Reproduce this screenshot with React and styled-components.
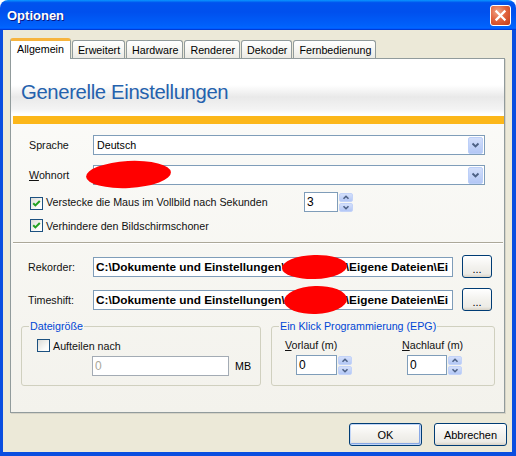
import React from 'react';
import styled, { createGlobalStyle } from 'styled-components';

const Global = createGlobalStyle`
  html, body { margin: 0; padding: 0; background: #ffffff; }
  body { font-family: "Liberation Sans", Arial, sans-serif; font-size: 10.7px; color: #000; }
  * { box-sizing: border-box; }
`;

const Window = styled.div`
  width: 516px;
  height: 456px;
  display: flex;
  flex-direction: column;
  border-radius: 8px 8px 0 0;
  overflow: hidden;
`;

const TitleBar = styled.div`
  height: 30px;
  flex: none;
  display: flex;
  align-items: center;
  justify-content: space-between;
  padding: 0 5px 0 7px;
  background: linear-gradient(to bottom, #0997ff 0%, #0053ee 9%, #0050ee 40%, #0061fb 86%, #0066ff 92%, #005bff 95%, #003dd7 97%, #003dd7 100%);
`;

const TitleText = styled.div`
  color: #fff;
  font: bold 13px/16px "Liberation Sans", Arial, sans-serif;
  text-shadow: 1px 1px 0 #0a1883;
  padding-top: 1px;
`;

const CloseBtn = styled.div`
  width: 21px;
  height: 21px;
  border: 1px solid #fff;
  border-radius: 3px;
  background: radial-gradient(circle at 35% 30%, #f0a487 0%, #e2653f 45%, #c23a16 100%);
  display: flex;
  align-items: center;
  justify-content: center;
  margin-top: 1px;
`;

const Frame = styled.div`
  flex: 1;
  display: flex;
  flex-direction: column;
  background: #ece9d8;
  border-style: solid;
  border-color: #0a4ee0;
  border-width: 0 4px 4px 3px;
  padding: 8px 7px 6px 7px;
`;

const TabRow = styled.div`
  display: flex;
  align-items: flex-end;
  gap: 1px;
  height: 20px;
  position: relative;
  z-index: 1;
`;

const Tab = styled.div`
  height: ${p => (p.$active ? 21 : 18)}px;
  margin-bottom: ${p => (p.$active ? -1 : 0)}px;
  padding: ${p => (p.$active ? '1px 6px 0' : '2px 4px 0 5px')};
  border: 1px solid #919b9c;
  border-bottom: none;
  border-top: ${p => (p.$active ? '3px solid #f7b43e' : '1px solid #919b9c')};
  border-radius: 3px 3px 0 0;
  background: ${p => (p.$active ? '#fff' : 'linear-gradient(#ffffff, #f4f4f0 60%, #ebeae4)')};
  line-height: 14px;
  font-size: 10.7px;
  white-space: nowrap;
  color: #000;
`;

const Panel = styled.div`
  flex: 1;
  display: flex;
  flex-direction: column;
  border: 1px solid #919b9c;
  background: linear-gradient(#fcfcfa, #f3f2ec);
  box-shadow: 1px 1px 0 #d6d3c6;
`;

const Header = styled.div`
  height: 57px;
  flex: none;
  padding: 21px 0 0 10px;
  background: linear-gradient(to bottom, #fff 0px, #fff 26px, #e9e9e9 38px, #f3f3f3 50px, #fff 55px, #fff 57px);
`;

const HeaderTitle = styled.h1`
  margin: 0;
  font: 400 20.3px/24px "Liberation Sans", Arial, sans-serif;
  letter-spacing: -0.35px;
  color: #2461ad;
`;

const OrangeBar = styled.div`
  height: 8px;
  flex: none;
  margin-left: 2px;
  background: #fcb71a;
`;

const Body = styled.div`
  flex: 1;
  display: flex;
  flex-direction: column;
  padding-top: 11px;
`;

const FormRow = styled.div`
  display: flex;
  align-items: center;
  margin-top: ${p => p.$mt || 0}px;
  padding: 0 19px 0 18px;
`;

const Label = styled.div`
  width: ${p => p.$w || 64}px;
  flex: none;
  color: #111;
  white-space: nowrap;
`;

const Combo = styled.div`
  position: relative;
  flex: 1;
  height: 20px;
  border: 1px solid #7f9db9;
  background: #fff;
  display: flex;
  align-items: center;
  justify-content: space-between;
  padding-left: 3px;
`;

const DropBtn = styled.div`
  width: 15px;
  height: 17px;
  margin-right: 1px;
  border: 1px solid #bccff8;
  border-radius: 2px;
  background: linear-gradient(#d3dffb, #b3c7f5);
  display: flex;
  align-items: center;
  justify-content: center;
`;

const Blob = styled.span`
  position: ${p => (p.$overlay ? 'absolute' : 'static')};
  left: ${p => p.$left || 0}px;
  top: ${p => p.$top || 0}px;
  display: inline-block;
  flex: none;
  width: ${p => p.$w}px;
  height: ${p => p.$h}px;
  margin: ${p => p.$m || 0};
  background: #ff0000;
  border-radius: 50%;
  transform: rotate(${p => p.$rot || 0}deg);
`;

const CheckRow = styled.div`
  display: flex;
  align-items: center;
  gap: 3px;
  margin-top: ${p => p.$mt || 0}px;
  margin-left: ${p => p.$ml || 0}px;
  height: ${p => p.$h || 13}px;
`;

const CheckText = styled.span`
  width: ${p => (p.$w ? `${p.$w}px` : 'auto')};
  white-space: nowrap;
  color: #111;
`;

const Box = styled.span`
  width: 13px;
  height: 13px;
  flex: none;
  border: 1px solid #1c5180;
  background: linear-gradient(135deg, #dcdcd7, #fbfbf9 70%, #fff);
  display: flex;
  align-items: center;
  justify-content: center;
  margin-top: ${p => p.$dy || 0}px;
`;

const SpinWrap = styled.div`
  display: flex;
  gap: 1px;
  margin-left: ${p => p.$ml || 0}px;
`;

const TextInput = styled.div`
  width: ${p => p.$w}px;
  height: 20px;
  border: 1px solid ${p => (p.$disabled ? '#a3abb4' : '#7f9db9')};
  background: #fff;
  padding-left: 2px;
  line-height: 18px;
  color: ${p => (p.$disabled ? '#aca899' : '#000')};
  font-size: 12px;
`;

const SpinBtns = styled.div`
  width: 14px;
  height: 20px;
  display: flex;
  flex-direction: column;
  gap: 1px;
  padding-top: 1px;
`;

const SpinHalf = styled.div`
  flex: 1;
  border: 1px solid #c3d3f8;
  border-radius: 2px;
  background: linear-gradient(#d3dffb, #b3c7f5);
  display: flex;
  align-items: center;
  justify-content: center;
`;

const Separator = styled.div`
  margin: ${p => p.$mt || 0}px 1px 0 2px;
  border-top: 1px solid #aca899;
  border-bottom: 1px solid #fff;
`;

const PathRow = styled.div`
  display: flex;
  align-items: center;
  height: 23px;
  padding: 0 12px 0 17px;
  margin-top: ${p => p.$mt || 0}px;
`;

const PathField = styled.div`
  flex: 1;
  height: 20px;
  border: 1px solid #7f9db9;
  background: #fff;
  display: flex;
  align-items: center;
  padding-left: 2px;
  white-space: nowrap;
  overflow-x: clip;
  overflow-y: visible;
  font: bold 11.8px/18px "Liberation Sans", Arial, sans-serif;
  color: #000;
`;

const XpButton = styled.div`
  width: ${p => p.$w}px;
  height: ${p => p.$h || 23}px;
  flex: none;
  margin-left: ${p => p.$ml || 0}px;
  border: 1px solid #003c74;
  border-radius: 3px;
  background: linear-gradient(#ffffff, #f3f2ee 50%, #ecebe6 85%, #d8d2c6);
  box-shadow: ${p => (p.$default ? 'inset 0 0 0 1px #c2d6f7, inset -1px -1px 0 1px #88a8e6' : 'none')};
  display: flex;
  align-items: center;
  justify-content: center;
  color: #000;
  font-size: 11px;
  padding-top: ${p => p.$pt || 0}px;
`;

const GroupRow = styled.div`
  display: flex;
  gap: 10px;
  padding: 0 9px 0 10px;
  margin-top: ${p => p.$mt || 0}px;
`;

const Group = styled.fieldset`
  margin: 0;
  padding: 0 0 ${p => p.$pb || 8}px 0;
  border: 1px solid #d0d0bf;
  border-radius: 3px;
  width: ${p => (p.$w ? `${p.$w}px` : 'auto')};
  flex: ${p => (p.$w ? 'none' : '1')};
  min-width: 0;
`;

const Legend = styled.legend`
  padding: 0 1px;
  margin-left: 7px;
  color: #0046d5;
  font-size: 10.7px;
  line-height: 14px;
`;

const InputRow = styled.div`
  display: flex;
  align-items: center;
  gap: 6px;
  margin: ${p => p.$mt || 0}px 0 0 ${p => p.$ml || 0}px;
`;

const Cols = styled.div`
  display: flex;
  padding-left: 13px;
  margin-top: 5px;
`;

const Col = styled.div`
  width: ${p => (p.$w ? `${p.$w}px` : 'auto')};
  display: flex;
  flex-direction: column;
  gap: 3px;
`;

const SmallLabel = styled.div`
  line-height: 14px;
  color: #111;
`;

const ButtonRow = styled.div`
  display: flex;
  justify-content: flex-end;
  gap: 12px;
  margin-top: 10px;
  margin-right: -2px;
`;

const Chevron = ({ up, w = 9, h = 6 }) => (
  <svg width={w} height={h} viewBox="0 0 9 6">
    <path d={up ? 'M1.5 4.5 L4.5 1.5 L7.5 4.5' : 'M1.5 1.5 L4.5 4.5 L7.5 1.5'} fill="none" stroke="#4d6185" strokeWidth="1.9" />
  </svg>
);

const Check = ({ checked, dy }) => (
  <Box $dy={dy}>
    {checked && (
      <svg width="11" height="11" viewBox="0 0 11 11">
        <path d="M2.2 5.2 L4.4 7.4 L8.8 3" fill="none" stroke="#21a121" strokeWidth="2" />
      </svg>
    )}
  </Box>
);

const Spinner = ({ value, w, ml }) => (
  <SpinWrap $ml={ml}>
    <TextInput $w={w}>{value}</TextInput>
    <SpinBtns>
      <SpinHalf><Chevron up w={8} h={5} /></SpinHalf>
      <SpinHalf><Chevron w={8} h={5} /></SpinHalf>
    </SpinBtns>
  </SpinWrap>
);

const tabs = ['Allgemein', 'Erweitert', 'Hardware', 'Renderer', 'Dekoder', 'Fernbedienung'];

export default function App() {
  return (
    <>
      <Global />
      <Window>
        <TitleBar>
          <TitleText>Optionen</TitleText>
          <CloseBtn>
            <svg width="13" height="13" viewBox="0 0 13 13">
              <path d="M2.5 2.5 L10.5 10.5 M10.5 2.5 L2.5 10.5" stroke="#fff" strokeWidth="2.3" strokeLinecap="square" />
            </svg>
          </CloseBtn>
        </TitleBar>
        <Frame>
          <TabRow>
            {tabs.map((t, i) => (
              <Tab key={t} $active={i === 0}>{t}</Tab>
            ))}
          </TabRow>
          <Panel>
            <Header>
              <HeaderTitle>Generelle Einstellungen</HeaderTitle>
            </Header>
            <OrangeBar />
            <Body>
              <FormRow>
                <Label>Sprache</Label>
                <Combo>
                  <span>Deutsch</span>
                  <DropBtn><Chevron /></DropBtn>
                </Combo>
              </FormRow>
              <FormRow $mt={10}>
                <Label><u>W</u>ohnort</Label>
                <Combo>
                  <Blob $overlay $left={-8} $top={-5} $w={85} $h={27} $rot={-3} />
                  <span />
                  <DropBtn><Chevron /></DropBtn>
                </Combo>
              </FormRow>
              <FormRow $mt={7}>
                <CheckRow $ml={1} $h={20}>
                  <Check checked dy={3} />
                  <CheckText $w={258}>Verstecke die Maus im Vollbild nach Sekunden</CheckText>
                </CheckRow>
                <Spinner value="3" w={34} />
              </FormRow>
              <FormRow $mt={7}>
                <CheckRow $ml={1}>
                  <Check checked />
                  <CheckText>Verhindere den Bildschirmschoner</CheckText>
                </CheckRow>
              </FormRow>
              <Separator $mt={10} />
              <PathRow $mt={11}>
                <Label $w={65}>Rekorder:</Label>
                <PathField>
                  C:\Dokumente und Einstellungen\
                  <Blob $w={65} $h={24} $m="0 -1px 0 -3px" $rot={-2} />
                  \Eigene Dateien\Ei
                </PathField>
                <XpButton $w={30} $ml={9} $pt={4}>...</XpButton>
              </PathRow>
              <PathRow $mt={10}>
                <Label $w={65}>Timeshift:</Label>
                <PathField>
                  C:\Dokumente und Einstellungen\
                  <Blob $w={63} $h={28} $m="0 -1px 0 -1px" $rot={-2} />
                  \Eigene Dateien\Ei
                </PathField>
                <XpButton $w={30} $ml={9} $pt={4}>...</XpButton>
              </PathRow>
              <GroupRow $mt={8}>
                <Group $w={240} $pb={9}>
                  <Legend>Dateigröße</Legend>
                  <CheckRow $mt={6} $ml={15}>
                    <Check />
                    <CheckText>Aufteilen nach</CheckText>
                  </CheckRow>
                  <InputRow $mt={4} $ml={70}>
                    <TextInput $w={137} $disabled>0</TextInput>
                    <span>MB</span>
                  </InputRow>
                </Group>
                <Group>
                  <Legend>Ein Klick Programmierung (EPG)</Legend>
                  <Cols>
                    <Col $w={117}>
                      <SmallLabel><u>V</u>orlauf (m)</SmallLabel>
                      <Spinner value="0" w={41} ml={11} />
                    </Col>
                    <Col>
                      <SmallLabel><u>N</u>achlauf (m)</SmallLabel>
                      <Spinner value="0" w={40} ml={5} />
                    </Col>
                  </Cols>
                </Group>
              </GroupRow>
            </Body>
          </Panel>
          <ButtonRow>
            <XpButton $w={73} $default>OK</XpButton>
            <XpButton $w={73}>Abbrechen</XpButton>
          </ButtonRow>
        </Frame>
      </Window>
    </>
  );
}
